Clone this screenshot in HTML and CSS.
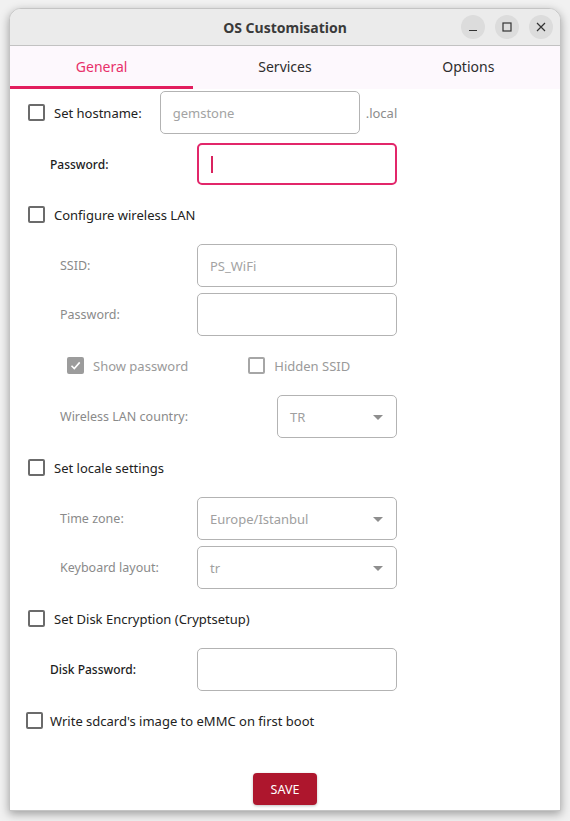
FILE: index.html
```html
<!DOCTYPE html>
<html lang="en">
<head>
 <meta charset="UTF-8">
 <title>OS Customisation</title>
 <link rel="stylesheet" href="styles.css">
</head>
<body>
<div class="window">
 <div class="titlebar">
  <span class="title">OS Customisation</span>
  <div class="winbtns">
   <span class="winbtn"><svg width="10" height="10" viewBox="0 0 10 10"><path d="M1 8.5h8" stroke="#333" stroke-width="1.2"/></svg></span>
   <span class="winbtn"><svg width="10" height="10" viewBox="0 0 10 10"><rect x="1" y="1" width="8" height="8" fill="none" stroke="#333" stroke-width="1.2"/></svg></span>
   <span class="winbtn"><svg width="10" height="10" viewBox="0 0 10 10"><path d="M1 1l8 8M9 1l-8 8" stroke="#333" stroke-width="1.2"/></svg></span>
  </div>
 </div>
 <div class="tabs">
  <div class="tab active">General</div>
  <div class="tab">Services</div>
  <div class="tab">Options</div>
 </div>
 <div class="content">
  <div class="row host">
   <span class="check"></span>
   <span class="checklabel">Set hostname:</span>
   <span class="field hostfield placeholder">gemstone</span>
   <span class="suffix">.local</span>
  </div>
  <div class="row pw">
   <span class="boldlabel">Password:</span>
   <span class="field focus"><span class="caret"></span></span>
  </div>
  <div class="checkrow">
   <span class="check"></span>
   <span class="checklabel">Configure wireless LAN</span>
  </div>
  <div class="row sub">
   <span class="sublabel">SSID:</span>
   <span class="field placeholder">PS_WiFi</span>
  </div>
  <div class="row sub gap6">
   <span class="sublabel">Password:</span>
   <span class="field"></span>
  </div>
  <div class="checkrow twochecks">
   <span class="check checked dim"><svg width="13" height="13" viewBox="0 0 13 13"><path d="M2.5 6.8l2.8 2.8 5.4-6.2" fill="none" stroke="#fff" stroke-width="1.6"/></svg></span>
   <span class="checklabel dimtext">Show password</span>
   <span class="check dim second"></span>
   <span class="checklabel dimtext">Hidden SSID</span>
  </div>
  <div class="row sub">
   <span class="sublabel">Wireless LAN country:</span>
   <span class="field combo small">TR<span class="arrow"></span></span>
  </div>
  <div class="checkrow">
   <span class="check"></span>
   <span class="checklabel">Set locale settings</span>
  </div>
  <div class="row sub">
   <span class="sublabel">Time zone:</span>
   <span class="field combo">Europe/Istanbul<span class="arrow"></span></span>
  </div>
  <div class="row sub gap6">
   <span class="sublabel">Keyboard layout:</span>
   <span class="field combo">tr<span class="arrow"></span></span>
  </div>
  <div class="checkrow">
   <span class="check"></span>
   <span class="checklabel">Set Disk Encryption (Cryptsetup)</span>
  </div>
  <div class="row">
   <span class="boldlabel">Disk Password:</span>
   <span class="field"></span>
  </div>
  <div class="checkrow last">
   <span class="check"></span>
   <span class="checklabel">Write sdcard's image to eMMC on first boot</span>
  </div>
  <div class="actions">
   <button type="button" class="save">SAVE</button>
  </div>
 </div>
</div>
</body>
</html>
```
FILE: styles.css
```css
html, body{
  margin: 0;
  height: 100%;
  background: #f1f1f1;
  font-family: "Noto Sans", "Open Sans", sans-serif;
}
.window{
  margin: 8px 0 0 9px;
  width: 552px;
  height: 803px;
  box-sizing: border-box;
  background: #fff;
  border: 1px solid #c4c4c4;
  border-radius: 12px 12px 0 0;
  box-shadow: 0 3px 10px rgba(0,0,0,0.35);
  overflow: hidden;
}
.titlebar{
  height: 36px;
  background: #ebebeb;
  border-bottom: 1px solid #c2c2c2;
  display: flex;
  align-items: center;
  justify-content: center;
  position: relative;
}
.title{
  font-family: "Noto Sans", sans-serif;
  font-weight: bold;
  font-size: 14px;
  color: #3a3a3a;
}
.winbtns{
  position: absolute;
  right: 7px;
  top: 6px;
  display: flex;
  gap: 10px;
}
.winbtn{
  width: 24px;
  height: 24px;
  border-radius: 50%;
  background: #dcdcdc;
  display: flex;
  align-items: center;
  justify-content: center;
}
.tabs{
  height: 43px;
  background: #fdf8fd;
  display: grid;
  grid-template-columns: 1fr 1fr 1fr;
}
.tab{
  display: flex;
  align-items: center;
  justify-content: center;
  font-size: 14px;
  color: #2d2d2d;
  box-sizing: border-box;
  padding-bottom: 3px;
}
.tab.active{
  color: #e8306a;
  padding-bottom: 0;
  border-bottom: 3px solid #e21e5e;
}
.content{
  padding-top: 2px;
}
.row{
  display: flex;
  align-items: center;
  height: 43px;
  font-size: 13px;
}
.row.pw{
  margin-top: 9px;
  height: 42px;
}
.row.gap6{
  margin-top: 6px;
}
.check{
  width: 17px;
  height: 17px;
  box-sizing: border-box;
  border: 2px solid #6b6b6b;
  border-radius: 2px;
  flex: none;
  display: flex;
  align-items: center;
  justify-content: center;
}
.check.dim{
  border-color: #a6a6a6;
}
.check.checked{
  background: #9c9c9c;
  border-color: #9c9c9c;
}
.checklabel{
  font-size: 13px;
  color: #222;
  margin-left: 9px;
}
.dimtext{
  color: #9a9a9a;
}
.row.host{
  padding-left: 18px;
}
.hostfield{
  margin-left: 18px;
}
.suffix{
  margin-left: 6px;
  color: #8c8c8c;
  font-size: 13px;
}
.field{
  width: 200px;
  height: 100%;
  box-sizing: border-box;
  border: 1px solid #b3b3b3;
  border-radius: 5px;
  display: flex;
  align-items: center;
  padding-left: 12px;
  font-size: 13px;
  color: #a0a0a0;
  position: relative;
}
.placeholder{
  color: #a3a3a3;
}
.field.focus{
  border: 2px solid #e2266a;
}
.caret{
  width: 2px;
  height: 17px;
  background: #d9235f;
}
.boldlabel{
  width: 147px;
  padding-left: 40px;
  font-size: 12px;
  font-weight: 500;
  color: #1c1c1c;
}
.sublabel{
  width: 137px;
  padding-left: 50px;
  font-size: 12.5px;
  color: #8a8a8a;
}
.row.sub .sublabel + .field.small{
  margin-left: 80px;
  width: 120px;
}
.arrow{
  position: absolute;
  right: 13px;
  top: 19px;
  width: 0;
  height: 0;
  border-left: 5px solid transparent;
  border-right: 5px solid transparent;
  border-top: 5px solid #8e8e8e;
}
.checkrow{
  height: 59px;
  display: flex;
  align-items: center;
  padding-left: 18px;
}
.checkrow.twochecks{
  padding-left: 57px;
}
.check.second{
  margin-left: 60px;
}
.checkrow.last{
  padding-left: 16px;
}
.checkrow.last .checklabel{
  margin-left: 7px;
}
.actions{
  display: flex;
  justify-content: center;
  margin-top: 23px;
}
.save{
  width: 64px;
  height: 32px;
  border: none;
  border-radius: 4px;
  background: #ae162d;
  color: #fff;
  font-family: inherit;
  font-size: 12.5px;
  box-shadow: 0 1px 3px rgba(0,0,0,0.25);
}
```
